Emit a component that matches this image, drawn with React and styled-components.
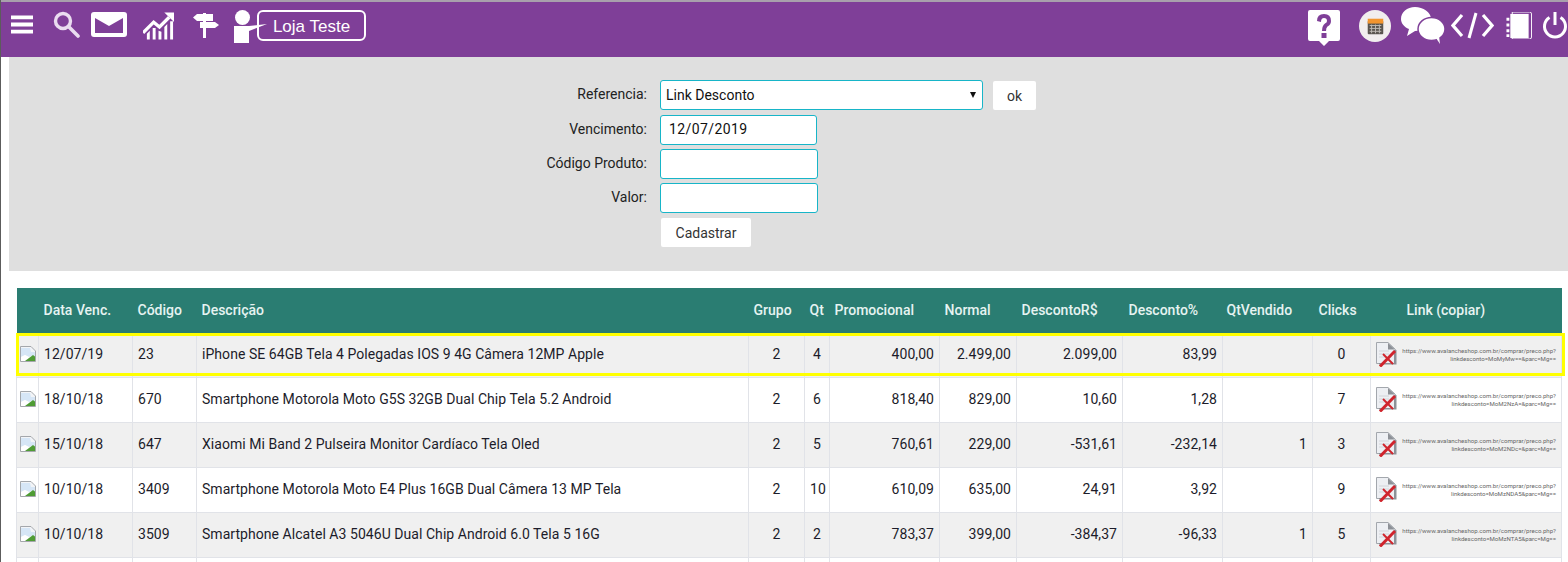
import React from 'react';
import styled, { createGlobalStyle } from 'styled-components';

const GlobalStyle = createGlobalStyle`
  html, body {
    margin: 0;
    padding: 0;
    height: 562px;
    overflow: hidden;
    background: #fff;
    font-family: Roboto, "Liberation Sans", sans-serif;
    color: #1c1c2a;
  }
`;

const rows = [
  { date: '12/07/19', code: '23', desc: 'iPhone SE 64GB Tela 4 Polegadas IOS 9 4G Câmera 12MP Apple', group: 2, qt: 4, promo: '400,00', normal: '2.499,00', off: '2.099,00', pct: '83,99', sold: '', clicks: 0, token: 'MoMyMw==&parc=Mg==', active: true },
  { date: '18/10/18', code: '670', desc: 'Smartphone Motorola Moto G5S 32GB Dual Chip Tela 5.2 Android', group: 2, qt: 6, promo: '818,40', normal: '829,00', off: '10,60', pct: '1,28', sold: '', clicks: 7, token: 'MoM2NzA=&parc=Mg==' },
  { date: '15/10/18', code: '647', desc: 'Xiaomi Mi Band 2 Pulseira Monitor Cardíaco Tela Oled', group: 2, qt: 5, promo: '760,61', normal: '229,00', off: '-531,61', pct: '-232,14', sold: '1', clicks: 3, token: 'MoM2NDc=&parc=Mg==' },
  { date: '10/10/18', code: '3409', desc: 'Smartphone Motorola Moto E4 Plus 16GB Dual Câmera 13 MP Tela', group: 2, qt: 10, promo: '610,09', normal: '635,00', off: '24,91', pct: '3,92', sold: '', clicks: 9, token: 'MoMzNDA5&parc=Mg==' },
  { date: '10/10/18', code: '3509', desc: 'Smartphone Alcatel A3 5046U Dual Chip Android 6.0 Tela 5 16G', group: 2, qt: 2, promo: '783,37', normal: '399,00', off: '-384,37', pct: '-96,33', sold: '1', clicks: 5, token: 'MoMzNTA5&parc=Mg==' },
];

const columns = [22, 94, 64, 552, 56, 25, 110, 77, 106, 100, 90, 58, 191];

const Page = styled.div`
  height: 562px;
  overflow: hidden;
  border-left: 1px solid #5c5c5c;
`;

const TopBar = styled.header`
  height: 55px;
  border-top: 2px solid #a8a0ac;
  background: #7f3f98;
  display: flex;
  align-items: flex-start;
  justify-content: space-between;
  color: #fff;
`;

const IconGroup = styled.div`
  display: flex;
  align-items: flex-start;
`;

const Icon = styled.svg`
  display: block;
  flex: none;
  margin-left: ${({ $left }) => $left || 0}px;
  margin-top: ${({ $top }) => $top}px;
`;

const StoreBox = styled.div`
  width: 109px;
  height: 31px;
  margin-top: 8px;
  margin-left: -11px;
  border: 2px solid #fff;
  border-radius: 6px;
  box-sizing: border-box;
  font-family: "Liberation Sans", Arial, sans-serif;
  font-size: 17px;
  line-height: 29px;
  text-align: center;
  flex: none;
`;

const FilterPanel = styled.section`
  height: 214px;
  margin-left: 8px;
  background: #dfdfdf;
  padding-top: 23px;
  box-sizing: border-box;
  font-size: 14px;
`;

const FormGrid = styled.div`
  display: grid;
  grid-template-columns: 639px auto;
  grid-template-rows: 35px repeat(4, 34px);
  column-gap: 12px;
`;

const Label = styled.label`
  text-align: right;
  line-height: 28px;
  padding-right: 1px;
  color: #222;
`;

const Field = styled.div`
  display: flex;
  align-items: flex-start;
`;

const TextBox = styled.div`
  width: ${({ $w }) => $w}px;
  height: 30px;
  box-sizing: border-box;
  background: #fff;
  border: 1px solid #17b5c8;
  border-radius: 3px;
  padding-left: ${({ $pad }) => $pad}px;
  line-height: 27px;
  letter-spacing: ${({ $track }) => $track || 0}px;
  color: #111;
  flex: none;
`;

const SelectBox = styled(TextBox)`
  display: flex;
  align-items: center;
  justify-content: space-between;
  padding-right: 6px;
`;

const Caret = styled.span`
  width: 0;
  height: 0;
  border-left: 3px solid transparent;
  border-right: 3px solid transparent;
  border-top: 6px solid #111;
`;

const Button = styled.button`
  height: 29px;
  margin-left: ${({ $left }) => $left || 0}px;
  margin-top: ${({ $top }) => $top || 0}px;
  padding: 0;
  width: ${({ $w }) => $w}px;
  background: #fff;
  border: 0;
  border-radius: 2px;
  font: 14px Roboto, sans-serif;
  color: #333;
`;

const TableWrap = styled.div`
  margin: 17px 0 0 15px;
`;

const Table = styled.table`
  width: 1545px;
  table-layout: fixed;
  border-collapse: collapse;
  font-size: 14px;
  letter-spacing: 0.05px;
`;

const HeadCell = styled.th`
  height: 45px;
  box-sizing: border-box;
  padding: 0 0 2px;
  background: #2a7d72;
  color: #e6f3f1;
  font-weight: 500;
  letter-spacing: 0;
  text-align: left;
  padding-left: ${({ $pad }) => $pad ?? 5}px;
  white-space: nowrap;
`;

const Row = styled.tr`
  height: ${({ $active }) => ($active ? 44 : 45)}px;
  background: ${({ $even }) => ($even ? '#f0f0f0' : '#fff')};
  position: relative;
  ${({ $active }) =>
    $active &&
    `
    &::after {
      content: '';
      position: absolute;
      left: -1px;
      right: -3px;
      top: 0;
      height: 43px;
      box-sizing: border-box;
      border: 3px solid #ffff00;
      pointer-events: none;
    }
  `}
`;

const Cell = styled.td`
  padding: 0 5px 1px;
  border: 1px solid #e1e3e8;
  border-top: 0;
  text-align: ${({ $align }) => $align || 'left'};
  white-space: nowrap;
  overflow: hidden;
  color: #1c1c2a;
`;

const ThumbCell = styled(Cell)`
  padding: 0 0 1px 3px;
`;

const LinkCell = styled(Cell)`
  padding: 0 5px 1px 5px;
`;

const LinkWrap = styled.div`
  display: flex;
  align-items: center;
  justify-content: space-between;
`;

const LinkText = styled.div`
  font-size: 6.08px;
  line-height: 8px;
  letter-spacing: 0;
  color: #666;
  text-align: right;
  margin-top: 1px;
`;

const Thumb = () => (
  <svg width="16" height="16" viewBox="0 0 16 16" style={{ display: 'block' }}>
    <path d="M0.5 0.5H11L15.5 5V15.500H0.5Z" fill="#f2f4f7" stroke="#a4a7ab" />
    <path d="M1 15V2H10L11 6H15V10L9 11L5 9L1 11Z" fill="#d6e6f6" />
    <path d="M1 15V11L5 9L9 11L12 10V15Z" fill="#ffffff" />
    <path d="M5 15L13 9L15 10.500V15Z" fill="#4f9c35" />
  </svg>
);

const BrokenDoc = () => (
  <svg width="21" height="25" viewBox="0 0 21 25" style={{ display: 'block', flex: 'none' }}>
    <path d="M0.500 0.500H12L19.500 7.500V21.500H0.500Z" fill="#edeff3" stroke="#a3a7ad" />
    <path d="M12 1L19 7.500H12Z" fill="#8d9197" />
    <path d="M18 8H20.500V22.500H3V21H18Z" fill="#8d9197" />
    <path d="M3 9H13M3 12H13M3 15H9" stroke="#d2d5da" />
    <path d="M4 24.500L19 9" stroke="#d0242c" strokeWidth="3" />
    <path d="M7 12L17 22" stroke="#d0242c" strokeWidth="2" />
  </svg>
);

const App = () => {
  return (
    <Page>
      <GlobalStyle />
      <TopBar>
        <IconGroup>
          <Icon $left={10} $top={13} width="22" height="19" viewBox="0 0 23 19">
            <path d="M0 0H23V4H0ZM0 7.500H23V11.500H0ZM0 15H23V19H0Z" fill="#fff" />
          </Icon>
          <Icon $left={20} $top={9} width="27" height="27" viewBox="0 0 27 27">
            <circle cx="10" cy="10" r="7.500" fill="none" stroke="#eadcf0" strokeWidth="3.400" />
            <path d="M16 16L25 25" stroke="#eadcf0" strokeWidth="3.600" strokeLinecap="round" />
          </Icon>
          <Icon $left={11} $top={10} width="36" height="26" viewBox="0 0 36 26">
            <rect width="36" height="25" rx="3" fill="#fff" />
            <path d="M4 6L18 14L32 6V21H4Z" fill="#7f3f98" />
          </Icon>
          <Icon $left={16} $top={10} width="32" height="28" viewBox="0 0 33 28">
            <path d="M0 21L11 10L17 15L27 5" fill="none" stroke="#fff" strokeWidth="3.400" />
            <path d="M22 0H32V10Z" fill="#fff" />
            <path d="M4 22L7 19V28H4ZM10 16H13V28H10ZM16 19L19 20V28H16ZM22 15L25 12V28H22ZM28 9H31V28H28Z" fill="#fff" />
          </Icon>
          <Icon $left={18} $top={10} width="26" height="26" viewBox="0 0 26 26">
            <path d="M10 1H13V26H10Z" fill="#fff" />
            <path d="M4 2H20V9H4L0 5.500Z" fill="#fff" />
            <path d="M7 10H22L26 13L22 16H7Z" fill="#fff" />
          </Icon>
          <Icon $left={15} $top={8} width="34" height="35" viewBox="0 0 34 35">
            <circle cx="8.500" cy="7.500" r="7.500" fill="#fff" />
            <path d="M0 16H15L33 14L15 21V33H0Z" fill="#fff" />
          </Icon>
          <StoreBox>Loja Teste</StoreBox>
        </IconGroup>
        <IconGroup>
          <Icon $top={8} width="32" height="37" viewBox="0 0 32 37">
            <path d="M2 0H30Q32 0 32 2V29Q32 31 30 31H21L16 36L11 31H2Q0 31 0 29V2Q0 0 2 0Z" fill="#fff" />
            <path d="M9 11Q9 4 16 4Q23 4 23 11Q23 14.500 19.500 16.500Q18 17.500 18 21H14Q14 15.500 17 13.500Q19 12.500 19 11Q19 8 16 8Q13 8 13 12Z" fill="#7f3f98" />
            <rect x="13.500" y="23" width="5" height="5" fill="#7f3f98" />
          </Icon>
          <Icon $left={19} $top={8} width="32" height="32" viewBox="0 0 33 33">
            <circle cx="16.500" cy="16.500" r="16.500" fill="#f1eeee" />
            <rect x="9" y="11" width="16" height="14" rx="1" fill="#59554f" />
            <rect x="9" y="9" width="16" height="5" fill="#f2952f" />
            <path d="M11 16H23M11 19H23M11 22H23M13 15V24M17 15V24M21 15V24" stroke="#bdb9b3" strokeWidth="1" />
          </Icon>
          <Icon $left={10} $top={5} width="44" height="38" viewBox="0 0 44 38">
            <path d="M14 0C22 0 30 5 30 12C30 18 22 24 14 24L6 29L8 22C3 20 0 16 0 12C0 5 6 0 14 0Z" fill="#fff" />
            <ellipse cx="30.500" cy="22" rx="13.500" ry="11.500" fill="#fff" stroke="#7f3f98" strokeWidth="1.500" />
            <path d="M35 31L39 37L38 29Z" fill="#fff" />
          </Icon>
          <Icon $left={6} $top={10} width="43" height="27" viewBox="0 0 43 27">
            <path d="M11 3L2 13.500L11 24M32 3L41 13.500L32 24" fill="none" stroke="#fff" strokeWidth="3.200" />
            <path d="M25 1L18 26" stroke="#fff" strokeWidth="3" />
          </Icon>
          <Icon $left={12} $top={10} width="26" height="27" viewBox="0 0 26 28">
            <path d="M6 0H24Q26 0 26 2V26Q26 28 24 28H6Z" fill="#7f3f98" stroke="#fff" strokeWidth="1" />
            <path d="M4 2H23V27H4Z" fill="#fff" />
            <path d="M0 6H3V9H0ZM0 12H3V15H0ZM0 18H3V21H0ZM0 23H3V26H0Z" fill="#fff" />
          </Icon>
          <Icon $left={10} $top={10} width="26" height="27" viewBox="0 0 25 27">
            <path d="M7 5.500A10.500 10.500 0 1 0 18 5.500" fill="none" stroke="#fff" strokeWidth="3" />
            <path d="M12.500 0V13" stroke="#fff" strokeWidth="3" />
          </Icon>
        </IconGroup>
      </TopBar>

      <FilterPanel>
        <FormGrid>
          <Label>Referencia:</Label>
          <Field>
            <SelectBox $w={323} $pad={5}>
              Link Desconto
              <Caret />
            </SelectBox>
            <Button $w={43} $left={10} $top={1}>ok</Button>
          </Field>
          <Label>Vencimento:</Label>
          <Field>
            <TextBox $w={157} $pad={8} $track={0.4}>12/07/2019</TextBox>
          </Field>
          <Label>Código Produto:</Label>
          <Field>
            <TextBox $w={158} />
          </Field>
          <Label>Valor:</Label>
          <Field>
            <TextBox $w={158} />
          </Field>
          <span />
          <Field>
            <Button $w={90} $left={1} $top={1}>Cadastrar</Button>
          </Field>
        </FormGrid>
      </FilterPanel>

      <TableWrap>
        <Table>
          <colgroup>
            {columns.map((w, i) => (
              <col key={i} style={{ width: w }} />
            ))}
          </colgroup>
          <thead>
            <tr>
              <HeadCell />
              <HeadCell>Data Venc.</HeadCell>
              <HeadCell>Código</HeadCell>
              <HeadCell>Descrição</HeadCell>
              <HeadCell>Grupo</HeadCell>
              <HeadCell>Qt</HeadCell>
              <HeadCell>Promocional</HeadCell>
              <HeadCell>Normal</HeadCell>
              <HeadCell>DescontoR$</HeadCell>
              <HeadCell $pad={6}>Desconto%</HeadCell>
              <HeadCell $pad={4}>QtVendido</HeadCell>
              <HeadCell $pad={6}>Clicks</HeadCell>
              <HeadCell $pad={36}>Link (copiar)</HeadCell>
            </tr>
          </thead>
          <tbody>
            {rows.map((r, i) => (
              <Row key={r.code} $even={i % 2 === 0} $active={r.active}>
                <ThumbCell><Thumb /></ThumbCell>
                <Cell>{r.date}</Cell>
                <Cell>{r.code}</Cell>
                <Cell>{r.desc}</Cell>
                <Cell $align="center">{r.group}</Cell>
                <Cell $align="center">{r.qt}</Cell>
                <Cell $align="right">{r.promo}</Cell>
                <Cell $align="right">{r.normal}</Cell>
                <Cell $align="right">{r.off}</Cell>
                <Cell $align="right">{r.pct}</Cell>
                <Cell $align="right">{r.sold}</Cell>
                <Cell $align="center">{r.clicks}</Cell>
                <LinkCell>
                  <LinkWrap>
                    <BrokenDoc />
                    <LinkText>
                      https://www.avalancheshop.com.br/comprar/preco.php?
                      <br />
                      linkdesconto={r.token}
                    </LinkText>
                  </LinkWrap>
                </LinkCell>
              </Row>
            ))}
            <Row>
              {columns.map((w, i) => (
                <Cell key={i} />
              ))}
            </Row>
          </tbody>
        </Table>
      </TableWrap>
    </Page>
  );
};

export default App;
